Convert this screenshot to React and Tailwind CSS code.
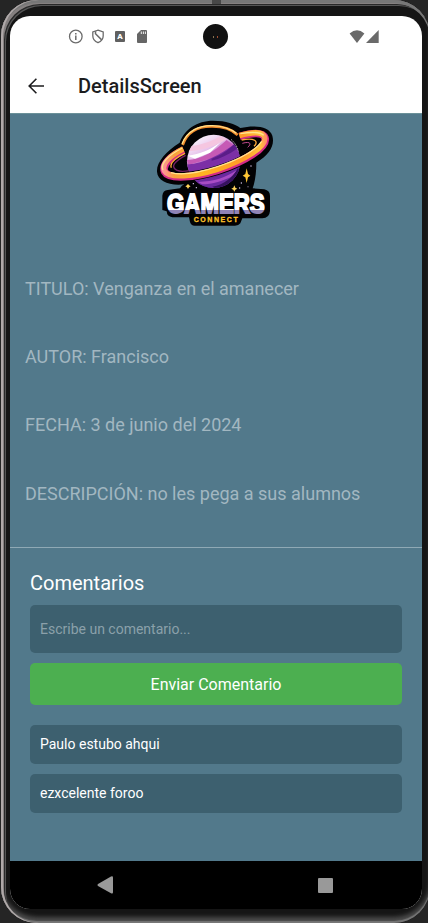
import React from "react";

function Logo() {
  return (
    <svg width="140" height="122" viewBox="0 12 420 366" className="ml-[135px] block shrink-0" aria-label="Gamers Connect">
      <defs>
        <linearGradient id="planet" x1="0.15" y1="0" x2="0.75" y2="1">
          <stop offset="0" stopColor="#fff" />
          <stop offset="0.3" stopColor="#e7c3ec" />
          <stop offset="0.48" stopColor="#b660c0" />
          <stop offset="0.7" stopColor="#6b2a9a" />
          <stop offset="1" stopColor="#43176f" />
        </linearGradient>
        <linearGradient id="ring" x1="40" y1="0" x2="380" y2="0" gradientUnits="userSpaceOnUse">
          <stop offset="0" stopColor="#ff8fc0" />
          <stop offset="0.14" stopColor="#f9a03c" />
          <stop offset="0.4" stopColor="#ffb321" />
          <stop offset="0.75" stopColor="#ff9a28" />
          <stop offset="0.9" stopColor="#ffc23c" />
          <stop offset="1" stopColor="#ff5f88" />
        </linearGradient>
        <linearGradient id="letters" x1="0" y1="245" x2="0" y2="315" gradientUnits="userSpaceOnUse">
          <stop offset="0.79" stopColor="#fff" />
          <stop offset="0.8" stopColor="#8f83b5" />
        </linearGradient>
        <clipPath id="globe"><circle cx="206" cy="154" r="80" /></clipPath>
      </defs>
      <path d="M104 98C118 58 156 32 204 32C244 32 270 42 286 54C330 44 374 49 382 77C390 106 374 133 334 158C334 190 330 214 323 235L358 238Q375 242 375 258V303Q373 325 352 325H292L286 340Q281 347 270 347H149Q138 347 135 336L132 322H82Q66 320 65 304L52 300V257Q54 241 68 240L105 235Q110 226 118 223C72 228 38 213 36 185C34 157 62 124 104 98Z" fill="#020204" />
      <path d="M113 105C126 66 160 48 202 49C240 49 263 60 278 75" fill="none" stroke="#f28b2b" strokeWidth="8" />
      <path d="M111 102C126 62 164 46 202 47C238 48 258 58 274 70" fill="none" stroke="#ffe08a" strokeWidth="4" />
      <circle cx="206" cy="154" r="80" fill="url(#planet)" />
      <g clipPath="url(#globe)">
        <path d="M125 150C170 148 205 127 245 90L269 108C236 130 208 143 179 151L130 165Z" fill="#c65ab5" />
        <path d="M130 108C165 108 195 95 228 78L245 88C207 110 174 121 132 124Z" fill="#f5c6e0" />
        <path d="M128 137C165 133 195 120 228 96L195 128L150 146Z" fill="#fff" />
        <path d="M124 164C180 160 225 134 274 98L288 141C230 181 176 194 128 191Z" fill="#7c2fa6" />
        <path d="M200 146C228 136 250 120 268 102L276 116C250 134 224 146 200 152Z" fill="#5a1d88" />
        <path d="M139 213C193 213 247 192 287 161L279 208L236 235H171Z" fill="#6b2a9f" />
        <path d="M159 216C208 215 242 203 275 181L265 197C234 213 203 223 171 223Z" fill="#a84cc4" />
        <path d="M202 230C239 224 263 202 279 174L288 190L252 228L217 239Z" fill="#35125d" />
      </g>
      <path d="M258 88Q276 104 280 124" stroke="#fff" strokeWidth="2" strokeDasharray="5 3" fill="none" />
      <path d="M116 120C74 140 50 166 59 185C72 210 150 202 218 181C300 154 368 112 360 84C354 66 322 68 284 79" fill="none" stroke="#020204" strokeWidth="28" />
      <path d="M116 120C74 140 50 166 59 185C72 210 150 202 218 181C300 154 368 112 360 84C354 66 322 68 284 79" fill="none" stroke="#d52b86" strokeWidth="23" />
      <path d="M115 117C73 137 49 163 58 182C71 207 149 199 217 178C299 151 367 109 359 81C353 64 321 66 283 77" fill="none" stroke="url(#ring)" strokeWidth="16" />
      <path d="M112 114C68 136 45 162 54 180M78 188C115 199 174 184 217 170C280 149 332 121 350 94M356 76C344 64 317 66 286 71" fill="none" stroke="#ffe48d" strokeWidth="4" />
      <path d="M122 136C94 151 82 164 87 173C92 183 110 186 132 182" fill="none" stroke="#742167" strokeWidth="4" />
      <path d="M120 130C91 144 73 160 79 173M290 90C328 82 343 94 327 109" fill="none" stroke="#ffaa37" strokeWidth="4" />
      <path d="M292 100C312 94 323 99 308 112" fill="none" stroke="#c64b90" strokeWidth="3" />
      <path d="M305 175L309 192L316 197L309 202L305 219L301 202L293 197L301 192Z" fill="#ffc735" />
      <path d="M268 226L271 233L277 236L271 239L268 245L265 239L259 236L265 233ZM129 221L132 226L137 229L132 232L129 237L126 232L121 229L126 226Z" fill="#ffd45a" />
      <g fill="#e9d7ff"><circle cx="145" cy="221" r="2" /><circle cx="154" cy="233" r="2" /><circle cx="318" cy="168" r="2" /><circle cx="289" cy="219" r="2" /><circle cx="284" cy="234" r="2" /><circle cx="309" cy="230" r="1.5" /></g>
      <text x="66" y="309" textLength="293" lengthAdjust="spacingAndGlyphs" fontFamily="Liberation Sans, sans-serif" fontSize="81" fontWeight="700" fill="url(#letters)" stroke="url(#letters)" strokeWidth="6">GAMERS</text>
      <text x="146" y="335" textLength="132" lengthAdjust="spacing" fontFamily="Liberation Sans, sans-serif" fontSize="21" fontWeight="700" fill="#ffc329" stroke="#ffc329" strokeWidth="0.8">CONNECT</text>
    </svg>
  );
}

function StatusBar() {
  return (
    <div className="relative flex h-[42px] shrink-0 items-center pb-px">
      <svg width="15" height="15" viewBox="0 0 15 15" className="ml-[58px]" fill="none" stroke="#6b6b6b">
        <circle cx="7.8" cy="7.5" r="6.3" strokeWidth="1.3" />
        <path d="M7.8 6.6V11M7.8 4V5.4" strokeWidth="1.5" />
      </svg>
      <svg width="14" height="15" viewBox="0 0 14 15" className="ml-[8px]" fill="none" stroke="#6b6b6b" strokeWidth="1.3">
        <path d="M7 1.2L12.2 3V6.8C12.2 10 10 12.6 7 13.7C4 12.6 1.8 10 1.8 6.8V3Z" />
        <path d="M4.5 2.2V4.8L10.7 10.9" strokeWidth="1.5" />
      </svg>
      <div className="ml-[10px] flex h-[11px] w-[10px] items-center justify-center rounded-[1px] bg-[#606060] text-[8px] font-black leading-none text-white">A</div>
      <svg width="10" height="13" viewBox="0 0 10 13" className="ml-[12px]">
        <path d="M4 0H9Q10 0 10 1V12Q10 13 9 13H1Q0 13 0 12V4Z" fill="#666" />
        <path d="M4.3 1.5V4M6.4 1.5V4M8.4 1.5V4" stroke="#fff" strokeWidth="0.9" />
      </svg>
      <div className="absolute left-[193px] top-[8px] flex size-[25px] items-center justify-center gap-[3px] rounded-full bg-[#111]">
        <div className="h-[2px] w-px bg-[#8b7350]" />
        <div className="h-[2px] w-px bg-[#a34d32]" />
      </div>
      <svg width="31" height="13" viewBox="0 0 31 13" className="ml-auto mr-[42px]" fill="#6a6a6a">
        <path d="M0.6 3.6Q8 -3 15.4 3.6L8 13Z" />
        <path d="M29.7 0V13H17Z" />
      </svg>
    </div>
  );
}

function Header() {
  return (
    <div className="flex h-[55px] shrink-0 items-center">
      <svg width="16" height="16" viewBox="0 0 16 16" className="ml-[18px]" fill="none" stroke="#1c1c1e" strokeWidth="1.6">
        <path d="M16 8H1.5M8.4 0.8L1.2 8L8.4 15.2" />
      </svg>
      <h1 className="ml-[34px] text-[20px] font-medium leading-[24px] text-[#1c1c1e]">DetailsScreen</h1>
    </div>
  );
}

const details = [
  "TITULO: Venganza en el amanecer",
  "AUTOR: Francisco",
  "FECHA: 3 de junio del 2024",
  "DESCRIPCIÓN: no les pega a sus alumnos",
];

const comments = ["Paulo estubo ahqui", "ezxcelente foroo"];

export default function App() {
  return (
    <div className="h-[923px] w-[428px] overflow-hidden bg-[#252525] font-[Roboto,sans-serif]">
      <div className="relative ml-px h-[923px] w-[429px] rounded-[36px] bg-[#151515] px-[9px] pt-[16px] shadow-[inset_2px_0_0_#b0a9a9,inset_0_3px_0_#777,inset_0_-2px_1px_#777,inset_3px_4px_0_#858080,inset_4px_5px_0_#292929,inset_5px_6px_0_#555,inset_0_-6px_4px_#4b4b4b]">
        <div className="absolute left-[211px] top-0 h-[4px] w-[9px] bg-[#484848]" />
        <div className="flex h-[893px] w-[412px] flex-col overflow-hidden rounded-[20px] bg-white">
          <StatusBar />
          <Header />
          <main className="flex h-[748px] shrink-0 flex-col border-t border-[#6b9199] bg-[#52798b]">
            <Logo />
            <div className="flex flex-col pt-[40.7px] text-[18px] leading-[24px] text-[#a2b7c1]">
              {details.map((line) => (
                <p key={line} className="mb-[44.4px] whitespace-nowrap pl-[15px]">{line}</p>
              ))}
            </div>
            <section className="-mt-[3px] flex flex-col border-t border-[#8fa9b5] px-[20px]">
              <h2 className="mt-[22.5px] text-[20px] leading-[24px] text-white">Comentarios</h2>
              <div className="mt-[10px] flex h-[48.5px] items-center rounded-[5px] bg-[#3d606f] pl-[10px] pt-px text-[14px] text-[#8ba0aa]">Escribe un comentario...</div>
              <button className="mt-[9.5px] h-[42px] rounded-[5px] bg-[#4caf50] pt-[2px] text-[16px] text-white">Enviar Comentario</button>
              <div className="mt-[20px] flex flex-col gap-[10px]">
                {comments.map((c) => (
                  <div key={c} className="flex h-[39px] items-center rounded-[5px] bg-[#3d606f] pl-[10px] pt-px text-[14px] text-white">{c}</div>
                ))}
              </div>
            </section>
          </main>
          <nav className="flex h-[48px] shrink-0 items-center bg-black">
            <svg width="16" height="18" viewBox="0 0 16 18" className="ml-[87px]" fill="#999">
              <path d="M14 0.6Q16 -0.2 16 1.8V16.2Q16 18.2 14 17.2L1 9.9Q0 9 1 8.1Z" />
            </svg>
            <div className="ml-[205px] size-[15px] rounded-[1px] bg-[#999]" />
          </nav>
        </div>
      </div>
    </div>
  );
}
